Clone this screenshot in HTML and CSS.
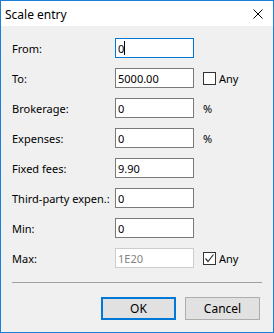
FILE: index.html
```html
<!DOCTYPE html>
<html>
 <head>
  <meta charset="utf-8">
  <title>Scale entry</title>
  <link rel="stylesheet" href="styles.css">
 </head>
 <body>
  <div class="dialog">
    <div class="titlebar">
      <span class="title">Scale entry</span>
      <span class="close">
        <svg width="10" height="10" viewBox="0 0 10 10">
          <path d="M0.5 0.5 L9.5 9.5 M9.5 0.5 L0.5 9.5" stroke="#000" stroke-width="1" fill="none"/>
        </svg>
      </span>
    </div>
    <div class="content">
      <div class="fields">
        <label>From:</label>
        <span class="field"><input class="focused" type="text" value="0"><i class="caret"></i></span>
        <span></span>

        <label>To:</label>
        <input type="text" value="5000.00">
        <label class="check"><span class="box"></span>Any</label>

        <label>Brokerage:</label>
        <input type="text" value="0">
        <span class="unit">%</span>

        <label>Expenses:</label>
        <input type="text" value="0">
        <span class="unit">%</span>

        <label>Fixed fees:</label>
        <input type="text" value="9.90">
        <span></span>

        <label>Third-party expen.:</label>
        <input type="text" value="0">
        <span></span>

        <label>Min:</label>
        <input type="text" value="0">
        <span></span>

        <label>Max:</label>
        <input type="text" value="1E20" disabled>
        <label class="check"><span class="box">
          <svg width="11" height="11" viewBox="0 0 11 11">
            <path d="M1.5 5.5 L4 8.5 L9.5 1.5" stroke="#333" stroke-width="1.2" fill="none"/>
          </svg>
        </span>Any</label>
      </div>
      <div class="separator"></div>
      <div class="buttons">
        <button class="btn default">OK</button>
        <button class="btn">Cancel</button>
      </div>
    </div>
  </div>
 </body>
</html>
```

FILE: styles.css
```css
* {
  margin: 0;
  padding: 0;
  box-sizing: border-box;
}
body {
  font-family: "Noto Sans", "Open Sans", sans-serif;
  font-size: 11px;
  color: #000;
}
.dialog {
  width: 274px;
  height: 333px;
  border: 1px solid #1a7fd6;
  background-color: #f0f0f0;
}
.titlebar {
  height: 25px;
  background-color: #fff;
  display: flex;
  align-items: center;
  justify-content: space-between;
  padding: 0 10px 0 4px;
}
.title {
  font-size: 12px;
  padding-top: 1px;
}
.close {
  display: flex;
  padding-top: 1px;
}

.content {
  padding: 12px 11px 0 11px;
}
.fields {
  display: grid;
  grid-template-columns: 103px 79px auto;
  grid-auto-rows: 20px;
  row-gap: 10px;
  align-items: center;
}
.fields label {
  white-space: nowrap;
}
.fields input {
  width: 79px;
  height: 20px;
  border: 1px solid #7a7a7a;
  background-color: #fff;
  padding: 0 2px;
  font-family: inherit;
  font-size: 11px;
  color: #000;
  outline: none;
}
.fields input.focused {
  border-color: #0078d7;
}
.fields input:disabled {
  border-color: #cccccc;
  color: #838383;
}
.field {
  position: relative;
  display: block;
  height: 20px;
}
.caret {
  position: absolute;
  left: 9px;
  top: 3px;
  width: 1px;
  height: 14px;
  background-color: #000;
}
.unit,
.check {
  margin-left: 9px;
}
.check {
  display: flex;
  align-items: center;
}
.check .box {
  width: 13px;
  height: 13px;
  border: 1px solid #333;
  background-color: #fff;
  margin-right: 3px;
  display: flex;
}
.separator {
  height: 1px;
  background-color: #a0a0a0;
  margin-top: 14px;
}
.buttons {
  display: flex;
  justify-content: flex-end;
  gap: 9px;
  margin-top: 14px;
  padding-right: 2px;
}
.btn {
  width: 75px;
  height: 23px;
  border: 1px solid #adadad;
  background-color: #e1e1e1;
  font-family: inherit;
  font-size: 12px;
  color: #000;
}
.btn.default {
  border: 2px solid #0078d7;
}
```
